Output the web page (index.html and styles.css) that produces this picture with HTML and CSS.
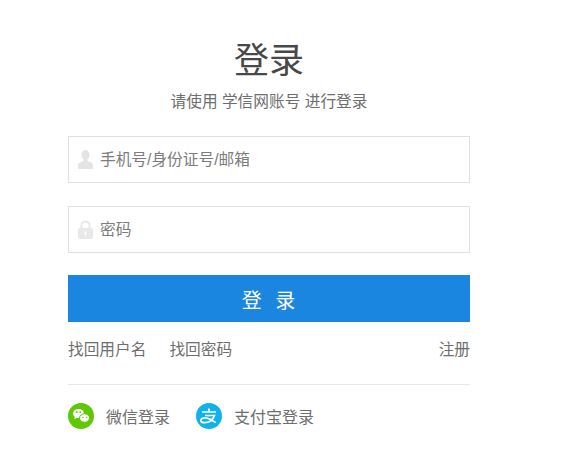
FILE: index.html
```html
<!DOCTYPE html>
<html lang="zh">
<head>
<meta charset="utf-8">
<title>登录</title>
<link rel="stylesheet" href="styles.css">
</head>
<body>
<main class="login">
  <h1 class="title">登录</h1>
  <p class="subtitle">请使用 学信网账号 进行登录</p>
  <form class="form">
    <label class="field">
      <svg class="field-icon" viewBox="0 0 15 19"><ellipse cx="7.500" cy="5" rx="4" ry="5" fill="#e4e4e4"/><path d="M5.500 8h4v2c0 1 .8 1.500 2.300 2.100 2 .8 3.200 1.500 3.200 3V19H0v-3.900c0-1.500 1.200-2.200 3.200-3C4.700 11.500 5.500 11 5.500 10z" fill="#e4e4e4"/></svg>
      <span class="placeholder">手机号/身份证号/邮箱</span>
    </label>
    <label class="field">
      <svg class="field-icon" viewBox="0 0 15 19"><path d="M3.500 9V5.500a4 4 0 0 1 8 0V9" fill="none" stroke="#e8e8e8" stroke-width="2"/><rect x="0" y="8" width="15" height="11" rx="2" fill="#e8e8e8"/><rect x="6.700" y="11.500" width="1.600" height="4" fill="#fff"/></svg>
      <span class="placeholder">密码</span>
    </label>
    <button class="submit" type="button">登 录</button>
  </form>
  <nav class="links">
    <a class="link">找回用户名</a>
    <a class="link">找回密码</a>
    <a class="link link-end">注册</a>
  </nav>
  <div class="social">
    <a class="social-item">
      <svg class="social-icon" viewBox="0 0 26 26"><circle cx="13" cy="13" r="13" fill="#5ec902"/><ellipse cx="10.500" cy="10.500" rx="5.500" ry="4.600" fill="#fff"/><path d="M7 13.500l-.8 2.700 3-1.600z" fill="#fff"/><ellipse cx="16.500" cy="15" rx="5" ry="4.200" fill="#fff" stroke="#5ec902" stroke-width="1"/><circle cx="8.700" cy="9.200" r=".9" fill="#5ec902"/><circle cx="12.300" cy="9.200" r=".9" fill="#5ec902"/><circle cx="15" cy="14.500" r=".7" fill="#5ec902"/><circle cx="18.500" cy="14.500" r=".7" fill="#5ec902"/></svg>
      <span>微信登录</span>
    </a>
    <a class="social-item">
      <svg class="social-icon" viewBox="0 0 26 26"><circle cx="13" cy="13" r="13" fill="#0fb2ee"/><path d="M6 9h14M13 5.500V9M9 12.500h9.500C17 16.500 13.500 19.700 8.500 19.700c-2.500 0-3.700-1-3.700-2.300 0-1.800 2.800-3 6-2.300 3.200.7 6 2.500 9 4.500" fill="none" stroke="#fff" stroke-width="1.700"/></svg>
      <span>支付宝登录</span>
    </a>
  </div>
</main>
</body>
</html>
```

FILE: styles.css
```css
* {
  box-sizing: border-box;
}

html,
body {
  margin: 0;
  padding: 0;
  background: #fff;
}

body {
  font-family: "Liberation Sans", "Noto Sans CJK SC", sans-serif;
  font-size: 15.7px;
  color: #666;
}

.login {
  width: 402px;
  margin-left: 68px;
  padding-top: 39px;
}

.title {
  margin: 0;
  font-size: 35px;
  font-weight: 400;
  line-height: 44px;
  text-align: center;
  color: #484848;
}

.subtitle {
  margin: 8px 0 0;
  line-height: 22px;
  text-align: center;
  color: #6e6e6e;
}

.form {
  display: flex;
  flex-direction: column;
  gap: 23px;
  margin-top: 23px;
}

.field {
  display: flex;
  align-items: center;
  height: 47px;
  padding-left: 9px;
  border: 1px solid #e0e0e0;
  background: #fff;
}

.field-icon {
  width: 15px;
  height: 19px;
  flex: none;
}

.placeholder {
  margin-left: 7px;
  padding-bottom: 3px;
  color: #7c7c7c;
}

.submit {
  display: block;
  height: 47px;
  margin-top: -1px;
  padding: 1px 0 0 3px;
  border: 0;
  background: #1a86e0;
  color: #fff;
  font: inherit;
  font-size: 20px;
  letter-spacing: 4px;
}

.links {
  display: flex;
  gap: 23px;
  margin-top: 17px;
  padding-bottom: 23px;
  line-height: 22px;
  border-bottom: 1px solid #e8e8e8;
}

.link {
  color: #6e6e6e;
}

.link-end {
  margin-left: auto;
}

.social {
  display: flex;
  gap: 26px;
  margin-top: 18px;
  font-size: 16px;
}

.social-item {
  display: flex;
  align-items: center;
  gap: 12px;
  color: #6e6e6e;
}

.social-icon {
  width: 26px;
  height: 26px;
  flex: none;
}
```
